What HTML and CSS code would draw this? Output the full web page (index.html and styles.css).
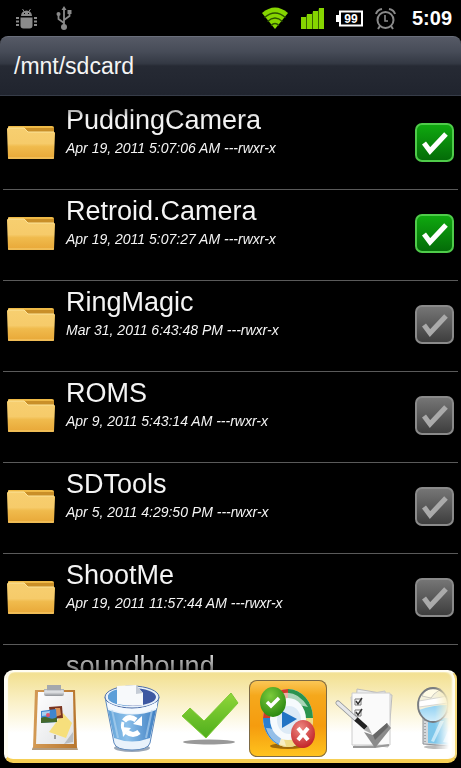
FILE: index.html
```html
<!DOCTYPE html>
<html lang="en">

<head>
  <meta charset="utf-8" />
  <title>/mnt/sdcard</title>
  <meta name="viewport" content="width=device-width, initial-scale=1" />
  <link rel="stylesheet" href="styles.css">
</head>

<body>
  <!-- shared drawings -->
  <svg class="defs" width="0" height="0" aria-hidden="true">
    <defs>
      <linearGradient id="folder-back" x1="0" y1="0" x2="0" y2="1">
        <stop offset="0" stop-color="#f0bb48" />
        <stop offset="1" stop-color="#c98d22" />
      </linearGradient>
      <linearGradient id="folder-front" x1="0" y1="0" x2="0" y2="1">
        <stop offset="0" stop-color="#f7cf70" />
        <stop offset="0.5" stop-color="#f6cb6a" />
        <stop offset="0.6" stop-color="#f0bb4d" />
        <stop offset="1" stop-color="#e8a737" />
      </linearGradient>
      <linearGradient id="wood" x1="0" y1="0" x2="1" y2="0">
        <stop offset="0" stop-color="#d39a55" />
        <stop offset="1" stop-color="#b8772f" />
      </linearGradient>
      <linearGradient id="metal" x1="0" y1="0" x2="0" y2="1">
        <stop offset="0" stop-color="#a9adb2" />
        <stop offset="0.5" stop-color="#d9dbde" />
        <stop offset="1" stop-color="#8d9196" />
      </linearGradient>
      <linearGradient id="paper" x1="0" y1="0" x2="1" y2="1">
        <stop offset="0" stop-color="#ffffff" />
        <stop offset="1" stop-color="#dfe1e4" />
      </linearGradient>
      <linearGradient id="bin" x1="0" y1="0" x2="1" y2="0">
        <stop offset="0" stop-color="#5fa0d6" />
        <stop offset="0.4" stop-color="#8cc0ea" />
        <stop offset="1" stop-color="#3f7fc2" />
      </linearGradient>
      <linearGradient id="tick-green" x1="0" y1="0" x2="0" y2="1">
        <stop offset="0" stop-color="#8fd63a" />
        <stop offset="1" stop-color="#4fae1c" />
      </linearGradient>
      <radialGradient id="ball-green" cx="0.4" cy="0.3" r="0.7">
        <stop offset="0" stop-color="#7ccb3c" />
        <stop offset="1" stop-color="#2c8a12" />
      </radialGradient>
      <radialGradient id="ball-red" cx="0.4" cy="0.3" r="0.7">
        <stop offset="0" stop-color="#ee8a83" />
        <stop offset="1" stop-color="#c3262a" />
      </radialGradient>
      <linearGradient id="sky" x1="0" y1="0" x2="0" y2="1">
        <stop offset="0" stop-color="#8fd0f2" />
        <stop offset="1" stop-color="#d3eefb" />
      </linearGradient>
      <symbol id="folder" viewBox="0 0 48 36">
        <path d="M1 2q0-1 1-1h43q2 0 2 2v28H1z" fill="url(#folder-back)" />
        <path d="M18 3h29v4H21z" fill="#c98f28" />
        <path d="M0 4q0-1 1-1h16l4 4h26q1 0 1 1l-1 25q0 1-1 1H2q-1 0-1-1z" fill="url(#folder-front)" />
        <path d="M1 3h16l4 4h26" fill="none" stroke="#fce49a" />
        <path d="M1 33h46" stroke="#f6cf72" />
      </symbol>
      <symbol id="tick" viewBox="0 0 39 39">
        <path d="M9 20l6 8 16-17" fill="none" stroke="currentColor" stroke-width="5" />
      </symbol>
    </defs>
  </svg>

  <div class="screen">
    <div class="statusbar">
      <svg width="21" height="24" viewBox="0 0 21 24" fill="#8a8a8a">
        <path d="M5 10a5.500 5.500 0 0 1 11 0z" />
        <path d="M6.500 3l2 3M14.500 3l-2 3" stroke="#8a8a8a" />
        <path d="M4.500 11.500h12v8q0 3-3 3h-6q-3 0-3-3z" />
        <path d="M0 12h3M0 15.500h3M0 19h3M18 12h3M18 15.500h3M18 19h3M1 12v-1M20 12v-1" stroke="#8a8a8a" stroke-width="1.800" />
        <path d="M8 7.500h1M12 7.500h1" stroke="#000" />
      </svg>
      <svg class="usb" width="16" height="26" viewBox="0 0 16 26" fill="none" stroke="#8a8a8a" stroke-width="1.800">
        <path d="M8 4v18M8 18l-5.500-4V9M8 15l5.500-4V7" />
        <path d="M8 1l2.500 4h-5z" fill="#8a8a8a" stroke="none" />
        <circle cx="2.500" cy="9" r="2" fill="#8a8a8a" stroke="none" />
        <path d="M11.500 5h4v4h-4z" fill="#8a8a8a" stroke="none" />
        <circle cx="8" cy="22" r="3" fill="#8a8a8a" stroke="none" />
      </svg>
      <div class="status-right">
        <svg width="28" height="24" viewBox="0 0 28 24">
          <path d="M14 23L1 7q13-11 26 0z" fill="#86d500" />
          <path d="M3.500 11.500q10.500-9 21 0M6.500 15.500q7.500-7 15 0M10 19.500q4-4 8 0" fill="none" stroke="#2d5200" stroke-width="1.300" />
        </svg>
        <svg width="23" height="24" viewBox="0 0 23 24">
          <path d="M0 11h5l1-3h5l1-3h5l1-3h5v21H0z" fill="#3a6400" />
          <path d="M0 11h5v12H0zM6 8h5v15H6zM12 5h5v18h-5zM18 2h5v21h-5z" fill="#86d500" />
        </svg>
        <svg width="27" height="24" viewBox="0 0 27 24">
          <path d="M4 5.500h22v14H4z" fill="none" stroke="#fff" stroke-width="2" />
          <path d="M0 9h3v7H0z" fill="#fff" />
          <text class="battery-text" x="15" y="17" text-anchor="middle">99</text>
        </svg>
        <svg width="21" height="24" viewBox="0 0 21 24" fill="none" stroke="#8a8a8a">
          <circle cx="10.500" cy="14" r="8" stroke-width="2" />
          <path d="M1 8q1-4 6-5M20 8q-1-4-6-5M5 20l-2 3M16 20l2 3" stroke-width="2" />
          <path d="M10 9v6h3" stroke-width="1.600" />
        </svg>
        <span class="clock">5:09</span>
      </div>
    </div>

    <h1 class="path">/mnt/sdcard</h1>

    <ul class="files">
      <li class="file">
        <svg class="folder"><use href="#folder" /></svg>
        <label class="info" for="f1"><span class="name">PuddingCamera</span><span class="meta">Apr 19, 2011 5:07:06 AM ---rwxr-x</span></label>
        <span class="check"><input type="checkbox" id="f1" checked><svg><use href="#tick" /></svg></span>
      </li>
      <li class="file">
        <svg class="folder"><use href="#folder" /></svg>
        <label class="info" for="f2"><span class="name">Retroid.Camera</span><span class="meta">Apr 19, 2011 5:07:27 AM ---rwxr-x</span></label>
        <span class="check"><input type="checkbox" id="f2" checked><svg><use href="#tick" /></svg></span>
      </li>
      <li class="file">
        <svg class="folder"><use href="#folder" /></svg>
        <label class="info" for="f3"><span class="name">RingMagic</span><span class="meta">Mar 31, 2011 6:43:48 PM ---rwxr-x</span></label>
        <span class="check"><input type="checkbox" id="f3"><svg><use href="#tick" /></svg></span>
      </li>
      <li class="file">
        <svg class="folder"><use href="#folder" /></svg>
        <label class="info" for="f4"><span class="name">ROMS</span><span class="meta">Apr 9, 2011 5:43:14 AM ---rwxr-x</span></label>
        <span class="check"><input type="checkbox" id="f4"><svg><use href="#tick" /></svg></span>
      </li>
      <li class="file">
        <svg class="folder"><use href="#folder" /></svg>
        <label class="info" for="f5"><span class="name">SDTools</span><span class="meta">Apr 5, 2011 4:29:50 PM ---rwxr-x</span></label>
        <span class="check"><input type="checkbox" id="f5"><svg><use href="#tick" /></svg></span>
      </li>
      <li class="file">
        <svg class="folder"><use href="#folder" /></svg>
        <label class="info" for="f6"><span class="name">ShootMe</span><span class="meta">Apr 19, 2011 11:57:44 AM ---rwxr-x</span></label>
        <span class="check"><input type="checkbox" id="f6"><svg><use href="#tick" /></svg></span>
      </li>
      <li class="file">
        <div class="info"><span class="name">soundhound</span></div>
      </li>
    </ul>

    <div class="toolbar">
      <div class="tools">
        <button class="tool" type="button" aria-label="Paste">
          <svg viewBox="0 0 78 77">
            <path d="M17 69l1-2h44l1 3H17z" fill="#7f5a2c" opacity="0.6" />
            <path d="M20 10h40l2 58H18z" fill="url(#wood)" />
            <path d="M23 12h35l1 52H21z" fill="url(#paper)" />
            <path d="M29 9h20v5q0 2-2 2H31q-2 0-2-2z" fill="url(#metal)" />
            <path d="M32 5h14v6H32z" fill="#a4a8ad" />
            <path d="M30 11h18" stroke="#eef0f2" />
            <path d="M48 33l9 10-6 15-17-6z" fill="#f6df7c" />
            <path d="M34 27l13-1 1 12-12 1z" fill="#7a3520" />
            <path d="M40 28l5 0 1 7-6 2z" fill="#d9935a" />
            <path d="M26 31l15-2 1 13-16 1z" fill="#3f86cf" />
            <path d="M26 38q4-2 8 0t8-1v5l-16 1z" fill="#43682b" />
            <path d="M27 32l8-1-1 4-7 1z" fill="#a9d0ef" />
            <circle cx="33" cy="35" r="2" fill="#e4526c" />
            <path d="M49 64l9-12v10z" fill="#b9bdc2" />
            <path d="M40 55v4" stroke="#555" />
          </svg>
        </button>
        <button class="tool" type="button" aria-label="Delete">
          <svg viewBox="0 0 78 77">
            <ellipse cx="39" cy="68" rx="18" ry="4" fill="#9aa7b8" />
            <path d="M12 17l9 46q2 7 18 7t18-7l9-46z" fill="#e9f2fb" stroke="#5c88bd" />
            <path d="M15 30q24 9 48 0l-6 28q-18 7-36 0z" fill="url(#bin)" />
            <ellipse cx="39" cy="17" rx="27" ry="11" fill="#e9f2fb" stroke="#4e6ea8" />
            <ellipse cx="39" cy="17" rx="24" ry="9" fill="#3d58a2" />
            <path d="M15 17q0-8 20-9v18q-20-2-20-9z" fill="#5c9ed8" />
            <path d="M24 6l19-1 7 8v12q-13 2-26-1z" fill="#f7f9fb" />
            <path d="M43 5v9l7-1z" fill="#c5ccd6" />
            <path d="M14 22q25 14 50 0v6q-25 11-49 0z" fill="#f4f9fe" />
            <g fill="none" stroke="#fff" stroke-width="5">
              <path d="M31 41q5-6 12-1" />
              <path d="M46 52q-6 5-12 0" />
              <path d="M30 42q-2 7 2 10" stroke-width="3" />
            </g>
            <path d="M40 44l9 2V36zM38 48l-9-1 1 10z" fill="#fff" />
            <path d="M19 30l6 28M59 30l-6 28" stroke="#b7d8f2" stroke-width="2" opacity="0.6" />
          </svg>
        </button>
        <button class="tool" type="button" aria-label="Select all">
          <svg viewBox="0 0 78 77">
            <ellipse cx="38" cy="62" rx="26" ry="2.500" fill="#999" />
            <path d="M11 36l8-8 14 13 27-28 7 10-32 35z" fill="url(#tick-green)" stroke="#7cc832" />
          </svg>
        </button>
        <button class="tool selected" type="button" aria-label="Toggle selection" aria-pressed="true">
          <svg viewBox="0 0 78 77">
            <ellipse cx="39" cy="66" rx="18" ry="3" fill="#a06a08" />
            <ellipse cx="39" cy="38" rx="25" ry="29" fill="#e8f0f4" />
            <path d="M39 38V9A25 29 0 0 1 64 38z" fill="#2a934e" />
            <path d="M39 9A25 29 0 0 0 14 38h25z" fill="#cf3a2a" />
            <path d="M14 38A25 29 0 0 0 30 65l9-27z" fill="#2b7fd0" />
            <path d="M30 65A25 29 0 0 0 64 38H39z" fill="#f0dc86" />
            <path d="M25 17q20-12 34 10-14-4-24 0z" fill="#fff" opacity="0.600" />
            <path d="M17 48q16 0 20 18-15-2-20-18z" fill="#fff" opacity="0.500" />
            <ellipse cx="39" cy="39" rx="18" ry="21" fill="#f6fafd" />
            <ellipse cx="40" cy="40" rx="12" ry="14" fill="#dceaf6" />
            <path d="M33 31l15 8-15 9z" fill="#2173c4" />
            <ellipse cx="24" cy="22" rx="13" ry="15" fill="url(#ball-green)" />
            <path d="M18 22l4 4 8-8" fill="none" stroke="#fff" stroke-width="3.500" />
            <ellipse cx="54" cy="54" rx="12" ry="14" fill="url(#ball-red)" />
            <path d="M49 48l10 12M59 48L49 60" stroke="#fff" stroke-width="4" />
          </svg>
        </button>
        <button class="tool" type="button" aria-label="Operations">
          <svg viewBox="0 0 78 77">
            <path d="M30 9l35 6-4 52-34-4z" fill="#eceded" stroke="#bbb" />
            <path d="M24 17l34-6 4 53-34 3z" fill="#e6e7e8" stroke="#c4c4c4" />
            <path d="M25 13h38v52H25z" fill="#fafafa" stroke="#ccc" />
            <path d="M28 19h6v6h-6zM28 30h6v6h-6z" fill="#fff" stroke="#777" />
            <path d="M29 21l2 3 4-6M29 32l2 3 4-6" fill="none" stroke="#333" stroke-width="1.500" />
            <path d="M26 67h22l14-2" fill="none" stroke="#999" stroke-width="2" />
            <path d="M37 52l9 3 14-12 4 5-16 20z" fill="#8b8b8b" />
            <path d="M46 55l14-12 1 4-13 13z" fill="#666" />
            <path d="M11 23l19 17" stroke="#8e9196" stroke-width="5" stroke-linecap="round" />
            <path d="M11 23l19 17" stroke="#e6e7e9" stroke-width="3.500" stroke-linecap="round" />
            <path d="M29 39l10 9" stroke="#222" stroke-width="5" />
            <path d="M37 50l4-4 4 8z" fill="#aaa" />
          </svg>
        </button>
        <button class="tool" type="button" aria-label="Search">
          <svg viewBox="0 0 78 77">
            <ellipse cx="34" cy="67" rx="15" ry="2" fill="#bbb" />
            <path d="M18 35l28-3v34l-28-2z" fill="#d5d8db" stroke="#8c8f94" />
            <path d="M23 38h23v27l-23-2z" fill="#7cc6ea" />
            <path d="M26 61l9-20 4 0-10 21zM38 62l8-18v19z" fill="#c3e7f8" />
            <path d="M20 40v22" stroke="#777" stroke-dasharray="1 2" />
            <ellipse cx="28" cy="25" rx="15" ry="17" fill="#f4f1dc" />
            <path d="M14 30q14-5 28-5 0 15-14 17-11-1-14-12z" fill="url(#sky)" />
            <path d="M14 21l29-5v7l-29 4z" fill="#fff" stroke="#ccc" stroke-width="0.800" />
            <path d="M17 16q3-7 10-7h9l-7 5-3 4z" fill="#fffbe6" stroke="#aaa" stroke-width="0.600" />
            <ellipse cx="28" cy="25" rx="15" ry="17" fill="none" stroke="#777b80" stroke-width="1.800" />
          </svg>
        </button>
      </div>
    </div>
  </div>
</body>

</html>
```
FILE: styles.css
```css
* {
  box-sizing: border-box;
}

body {
  margin: 0;
  background: #000;
  color: #f4f4f4;
  font-family: "Liberation Sans", Arial, sans-serif;
}

.defs {
  position: absolute;
}

.screen {
  height: 100vh;
  display: flex;
  flex-direction: column;
  overflow: hidden;
}

.statusbar {
  display: flex;
  align-items: center;
  flex: none;
  height: 36px;
  padding: 0 9px 0 16px;
}

.usb {
  margin-left: 19px;
}

.status-right {
  display: flex;
  align-items: center;
  gap: 12px;
  margin-left: auto;
}

.clock {
  margin-left: 4px;
  color: #fff;
  font-size: 20px;
  font-weight: bold;
}

.battery-text {
  fill: #fff;
  font-size: 12px;
  font-weight: bold;
}

.path {
  flex: none;
  margin: 0;
  padding: 0 14px;
  height: 60px;
  line-height: 58px;
  font-size: 23px;
  font-weight: normal;
  border-top: 1px solid #6a6f7b;
  border-bottom: 1px solid #363c48;
  border-radius: 8px 8px 0 0;
  background: linear-gradient(#565a66, #474c58 25%, #333843 46%, #262a34 50%, #20242e);
}

/* rows fade out at the top and bottom of the list */
.files {
  flex: 1;
  min-height: 0;
  overflow: hidden;
  list-style: none;
  margin: 0;
  padding: 3px 3px 0;
  -webkit-mask-image: linear-gradient(rgba(0, 0, 0, .2), #000 22px, #000 calc(100% - 20px), rgba(0, 0, 0, .5));
  mask-image: linear-gradient(rgba(0, 0, 0, .2), #000 22px, #000 calc(100% - 20px), rgba(0, 0, 0, .5));
}

.file {
  display: flex;
  align-items: center;
  gap: 11px;
  height: 91px;
  padding: 6px 4px 9px;
  border-bottom: 1px solid #5a5a5a;
}

.file:last-child {
  padding-left: 63px;
}

.folder {
  flex: none;
  width: 48px;
  height: 36px;
}

.info {
  flex: 1;
  min-width: 0;
  align-self: flex-start;
  display: flex;
  flex-direction: column;
  gap: 5px;
  white-space: nowrap;
}

.name {
  font-size: 27px;
  line-height: 30px;
}

.meta {
  font-size: 14px;
  line-height: 16px;
  font-style: italic;
}

/* tick box with the mark laid over it in the same cell */
.check {
  display: grid;
  flex: none;
  width: 39px;
  height: 39px;
}

.check input,
.check svg {
  grid-area: 1 / 1;
  width: 39px;
  height: 39px;
  margin: 0;
}

.check input {
  appearance: none;
  border: 2px solid #8a8a8a;
  border-radius: 7px;
  background: linear-gradient(#757575, #3e3e3e);
}

.check input:checked {
  border-color: #4fcb4a;
  background: linear-gradient(#0fa80f, #046c08);
}

.check svg {
  color: #aaa;
  pointer-events: none;
}

.check input:checked + svg {
  color: #fff;
}

.toolbar {
  flex: none;
  margin: 0 4px 5px;
  padding: 8px 6px 2px 9px;
  border: 2px solid #fffdf2;
  border-right-color: #f3d878;
  border-bottom: 4px solid #f6cf55;
  border-radius: 9px;
  background: linear-gradient(#f2df8e, #faf1c8 35%, #fff 70%);
  box-shadow: inset -3px 0 2px #fffdf2, inset 2px 0 1px #fffdf2;
}

.tools {
  display: flex;
  overflow: hidden;
  -webkit-mask-image: linear-gradient(to left, transparent, #000 14px);
  mask-image: linear-gradient(to left, transparent, #000 14px);
}

.tool {
  flex: none;
  width: 78px;
  height: 77px;
  padding: 0;
  border: 0;
  background: none;
}

.tool svg {
  display: block;
  width: 100%;
  height: 100%;
}

.tool.selected {
  border-radius: 8px;
  box-shadow: inset 0 0 0 1px #7d6a45;
  background: linear-gradient(#fbc95a, #f5a81c 20%, #f59c0e 60%, #ffc41e);
}
```
